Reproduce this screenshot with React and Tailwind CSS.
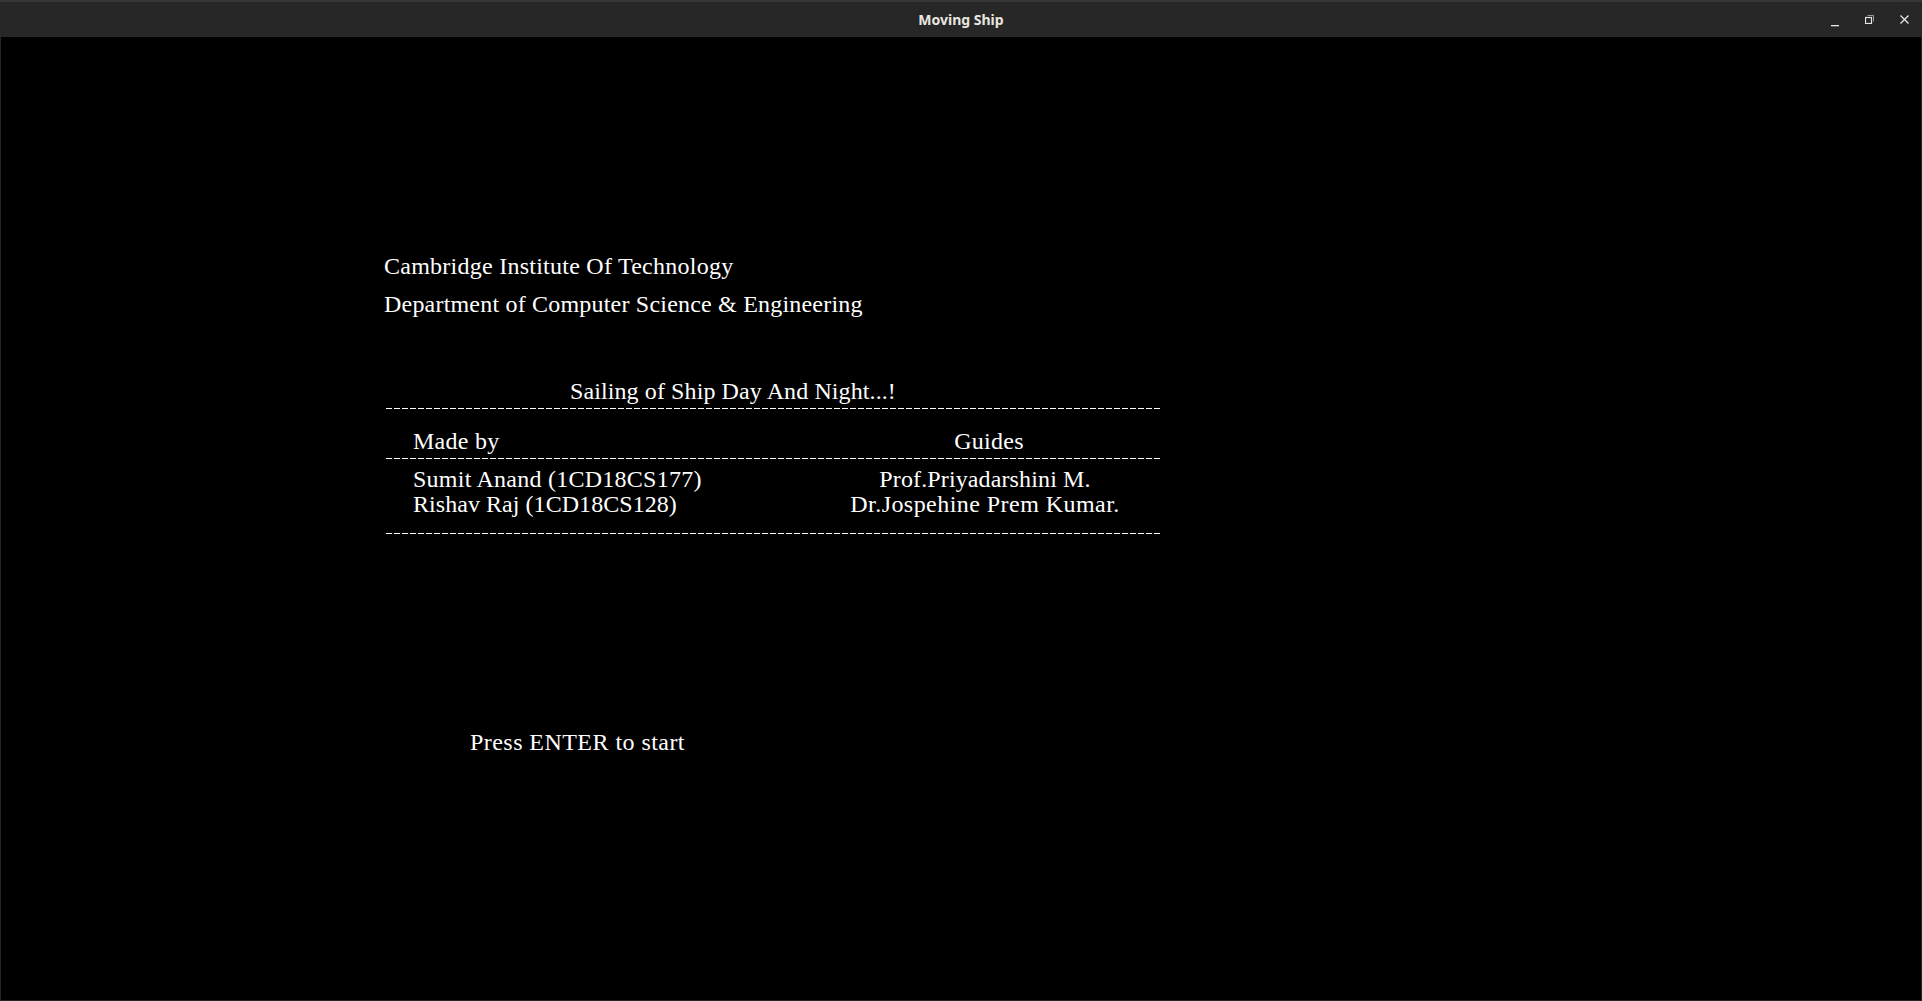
export default function App() {
  const serif = { fontFamily: '"Liberation Serif", "Times New Roman", serif' };
  const dash =
    "h-px w-[774px] bg-[repeating-linear-gradient(90deg,#ffffff_0px,#ffffff_6px,transparent_6px,transparent_8px)]";
  return (
    <div className="w-[1922px] h-[1001px] bg-black flex flex-col overflow-hidden">
      {/* Title bar */}
      <div className="h-[37px] shrink-0 bg-[#272727] border-t-2 border-[#383838] grid grid-cols-[1fr_auto_1fr] items-center">
        <div />
        <div
          className="text-[14px] font-bold text-[#e8e6e1] leading-none"
          style={{ fontFamily: '"Noto Sans", "Open Sans", sans-serif' }}
        >
          Moving Ship
        </div>
        <div className="flex justify-end items-center pr-[13px] gap-[26px]">
          <svg width="8" height="8" viewBox="0 0 8 8" className="mt-[6px]">
            <rect x="0" y="6" width="8" height="1.3" fill="#e6e6e6" />
          </svg>
          <svg width="9" height="9" viewBox="0 0 9 9">
            <path d="M2.5 0.5H8.5V6.5" stroke="#9a9a9a" strokeWidth="1" fill="none" />
            <rect x="0.5" y="2.5" width="6" height="6" stroke="#e6e6e6" strokeWidth="1.2" fill="none" />
          </svg>
          <svg width="9" height="9" viewBox="0 0 9 9">
            <path d="M0.5 0.5L8.5 8.5M8.5 0.5L0.5 8.5" stroke="#e6e6e6" strokeWidth="1.3" />
          </svg>
        </div>
      </div>

      {/* Body */}
      <div
        className="flex-1 border-x border-b border-[#262626] bg-black text-white text-[24px] leading-[24px] tracking-[0.25px]"
        style={serif}
      >
        <div className="pl-[383px] flex flex-col items-start">
          <div className="mt-[217px]">Cambridge Institute Of Technology</div>
          <div className="mt-[14px] tracking-[0.2px]">Department of Computer Science &amp; Engineering</div>

          <div className="mt-[63px] ml-[186px] tracking-[0.1px]">Sailing of Ship Day And Night...!</div>
          <div className={"mt-[5px] ml-[2px] " + dash} />

          <div className="mt-[20px] flex">
            <div className="ml-[29px] w-[437px]">Made by</div>
            <div className="w-[270px] text-center pl-[8px]">Guides</div>
          </div>
          <div className={"mt-[5px] ml-[2px] " + dash} />

          <div className="mt-[8px] flex">
            <div className="ml-[29px] w-[437px] flex flex-col gap-[1px]">
              <div>Sumit Anand (1CD18CS177)</div>
              <div className="tracking-[0.05px]">Rishav Raj (1CD18CS128)</div>
            </div>
            <div className="w-[270px] flex flex-col gap-[1px] items-center">
              <div className="tracking-[0.13px]">Prof.Priyadarshini M.</div>
              <div className="tracking-[0.45px]">Dr.Jospehine Prem Kumar.</div>
            </div>
          </div>
          <div className={"mt-[17px] ml-[2px] " + dash} />

          <div className="mt-[196px] ml-[86px] tracking-[0.45px]">Press ENTER to start</div>
        </div>
      </div>
    </div>
  );
}
